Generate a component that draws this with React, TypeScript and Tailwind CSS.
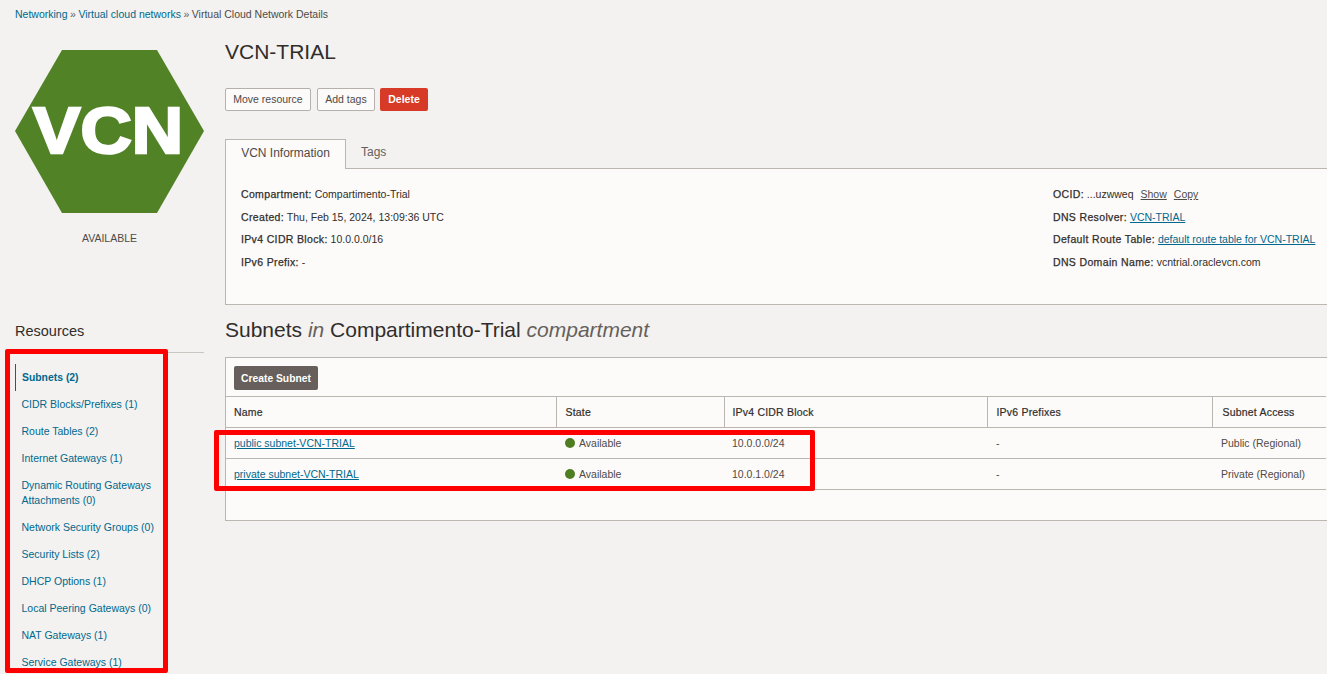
const resources = [
  'CIDR Blocks/Prefixes (1)',
  'Route Tables (2)',
  'Internet Gateways (1)',
  'Dynamic Routing Gateways Attachments (0)',
  'Network Security Groups (0)',
  'Security Lists (2)',
  'DHCP Options (1)',
  'Local Peering Gateways (0)',
  'NAT Gateways (1)',
  'Service Gateways (1)',
];

const subnets = [
  { name: 'public subnet-VCN-TRIAL', cidr: '10.0.0.0/24', access: 'Public (Regional)' },
  { name: 'private subnet-VCN-TRIAL', cidr: '10.0.1.0/24', access: 'Private (Regional)' },
];

const Label = ({ children }: { children: string }) => (
  <span className="tracking-[0.35px] text-[#312d2a] [-webkit-text-stroke:0.25px_#312d2a]">{children}</span>
);

const Hexagon = () => (
  <svg width="189" height="163" viewBox="0 0 189 163" className="block">
    <polygon points="47,0 142,0 189,81 142,163 47,163 0,81" fill="#518226" />
    <text
      x="18"
      y="103"
      fill="#ffffff"
      stroke="#ffffff"
      strokeWidth="2.5"
      fontSize="64"
      fontWeight="700"
      fontFamily="'Liberation Sans', Arial, sans-serif"
      textLength="150"
      lengthAdjust="spacingAndGlyphs"
    >
      VCN
    </text>
  </svg>
);

export default function App() {
  return (
    <div className="relative h-[674px] w-[1327px] overflow-hidden bg-[#f3f2f1] font-['Liberation_Sans',Arial,sans-serif] text-[10.5px] leading-[15px] text-[#312d2a]">
      {/* breadcrumb */}
      <div className="flex h-[29px] items-center pl-[15px]">
        <a className="text-[#00688c]">Networking</a>
        <span className="mx-[2.5px] text-[#665f5b]">»</span>
        <a className="text-[#00688c]">Virtual cloud networks</a>
        <span className="mx-[2.5px] text-[#665f5b]">»</span>
        <span className="text-[#4f4a47]">Virtual Cloud Network Details</span>
      </div>

      <div className="flex pl-[15px]">
        {/* left column */}
        <div className="w-[189px] shrink-0 pt-[21px]">
          <Hexagon />
          <div className="mt-[18px] text-center text-[#4f4a47]">AVAILABLE</div>

          <h3 className="mt-[75px] text-[14.5px] leading-[20px] text-[#312d2a]">Resources</h3>
          <div className="mt-[11px] border-t border-[#c9c5c0]" />
          <ul className="mt-[11px] text-[10.5px] text-[#00688c]">
            <li className="flex h-[27px] items-center border-l border-[#00688c] pl-[6px] text-[10.4px] font-bold">
              Subnets (2)
            </li>
            {resources.map((item) => (
              <li key={item} className="py-[6px] pl-[6.5px] pr-[2px]">
                {item}
              </li>
            ))}
          </ul>
        </div>

        {/* main column */}
        <div className="ml-[21px] w-[1140px] shrink-0">
          <h1 className="mt-[9px] text-[21px] leading-[28px] text-[#312d2a]">VCN-TRIAL</h1>

          <div className="mt-[22px] flex">
            <button className="h-[23px] w-[86px] rounded-[2px] border border-[#b5b0ab] bg-[#fcfbfa] text-[#4f4a47]">
              Move resource
            </button>
            <button className="ml-[6px] h-[23px] w-[58px] rounded-[2px] border border-[#b5b0ab] bg-[#fcfbfa] text-[#4f4a47]">
              Add tags
            </button>
            <button className="ml-[5px] h-[23px] w-[48px] rounded-[2px] bg-[#d73a26] font-bold text-white">Delete</button>
          </div>

          {/* tabs */}
          <div className="mt-[28px] flex h-[30px] items-stretch text-[12px]">
            <div className="relative z-10 flex h-[30px] w-[121px] items-center justify-center border border-b-0 border-[#bcb6b1] bg-[#fcfbfa] pb-[2px] text-[#4f4a47]">
              VCN Information
            </div>
            <div className="ml-[15px] pt-[6px] text-[#665f5b]">Tags</div>
          </div>

          <section className="-mt-px flex h-[137px] border border-[#bcb6b1] bg-[#fcfbfa] pt-[18px] pl-[15px]">
            <div className="w-[812px] shrink-0 space-y-[7.7px]">
              <p>
                <Label>Compartment:</Label> Compartimento-Trial
              </p>
              <p>
                <Label>Created:</Label> Thu, Feb 15, 2024, 13:09:36 UTC
              </p>
              <p>
                <Label>IPv4 CIDR Block:</Label> 10.0.0.0/16
              </p>
              <p>
                <Label>IPv6 Prefix:</Label> -
              </p>
            </div>
            <div className="space-y-[7.7px]">
              <p className="whitespace-nowrap">
                <Label>OCID:</Label> ...uzwweq
                <a className="ml-[7px] underline text-[#4f4a47]">Show</a>
                <a className="ml-[7px] underline text-[#4f4a47]">Copy</a>
              </p>
              <p className="whitespace-nowrap">
                <Label>DNS Resolver:</Label> <a className="text-[#00688c] underline">VCN-TRIAL</a>
              </p>
              <p className="whitespace-nowrap">
                <Label>Default Route Table:</Label>{' '}
                <a className="text-[#00688c] underline">default route table for VCN-TRIAL</a>
              </p>
              <p className="whitespace-nowrap">
                <Label>DNS Domain Name:</Label> vcntrial.oraclevcn.com
              </p>
            </div>
          </section>

          <h2 className="mt-[11px] text-[21px] leading-[28px] text-[#312d2a]">
            Subnets <em className="text-[#665f5b]">in</em> Compartimento-Trial{' '}
            <em className="text-[#665f5b]">compartment</em>
          </h2>

          {/* subnets panel */}
          <section className="mt-[13px] h-[164px] border border-[#bcb6b1] bg-[#fcfbfa]">
            <div className="h-[38px] pl-[8px] pt-[8px]">
              <button className="h-[24px] w-[84px] rounded-[2px] bg-[#665f5b] text-[10.3px] font-bold text-white">
                Create Subnet
              </button>
            </div>
            <table className="w-[1100px] table-fixed border-collapse text-left">
              <thead>
                <tr className="h-[31px] border-y border-[#bcb6b1] text-[#312d2a]">
                  <th className="w-[330px] pl-[8px] font-normal tracking-[0.2px] [-webkit-text-stroke:0.2px_#312d2a]">Name</th>
                  <th className="w-[168px] border-l border-[#bcb6b1] pl-[9px] font-normal tracking-[0.2px] [-webkit-text-stroke:0.2px_#312d2a]">
                    State
                  </th>
                  <th className="w-[263px] border-l border-[#bcb6b1] pl-[8px] font-normal tracking-[0.2px] [-webkit-text-stroke:0.2px_#312d2a]">
                    IPv4 CIDR Block
                  </th>
                  <th className="w-[225px] border-l border-[#bcb6b1] pl-[9px] font-normal tracking-[0.2px] [-webkit-text-stroke:0.2px_#312d2a]">
                    IPv6 Prefixes
                  </th>
                  <th className="border-l border-[#bcb6b1] pl-[10px] font-normal tracking-[0.2px] [-webkit-text-stroke:0.2px_#312d2a]">
                    Subnet Access
                  </th>
                </tr>
              </thead>
              <tbody>
                {subnets.map((s) => (
                  <tr key={s.name} className="h-[31px] border-b border-[#bcb6b1] text-[#4f4a47]">
                    <td className="pl-[8px]">
                      <a className="text-[#00688c] underline">{s.name}</a>
                    </td>
                    <td className="pl-[9px]">
                      <span className="flex items-center gap-[4px]">
                        <span className="h-[10px] w-[10px] rounded-full bg-[#4f7d21]" />
                        Available
                      </span>
                    </td>
                    <td className="pl-[8px]">{s.cidr}</td>
                    <td className="pl-[9px]">-</td>
                    <td className="pl-[9px]">{s.access}</td>
                  </tr>
                ))}
              </tbody>
            </table>
          </section>
        </div>
      </div>

      {/* red annotation boxes drawn over the screenshot */}
      <div className="absolute left-[5px] top-[349px] h-[324px] w-[163px] rounded-[2px] border-[5px] border-[#ff0000]" />
      <div className="absolute left-[214px] top-[430px] h-[61px] w-[601px] rounded-[2px] border-[5px] border-[#ff0000]" />
    </div>
  );
}
